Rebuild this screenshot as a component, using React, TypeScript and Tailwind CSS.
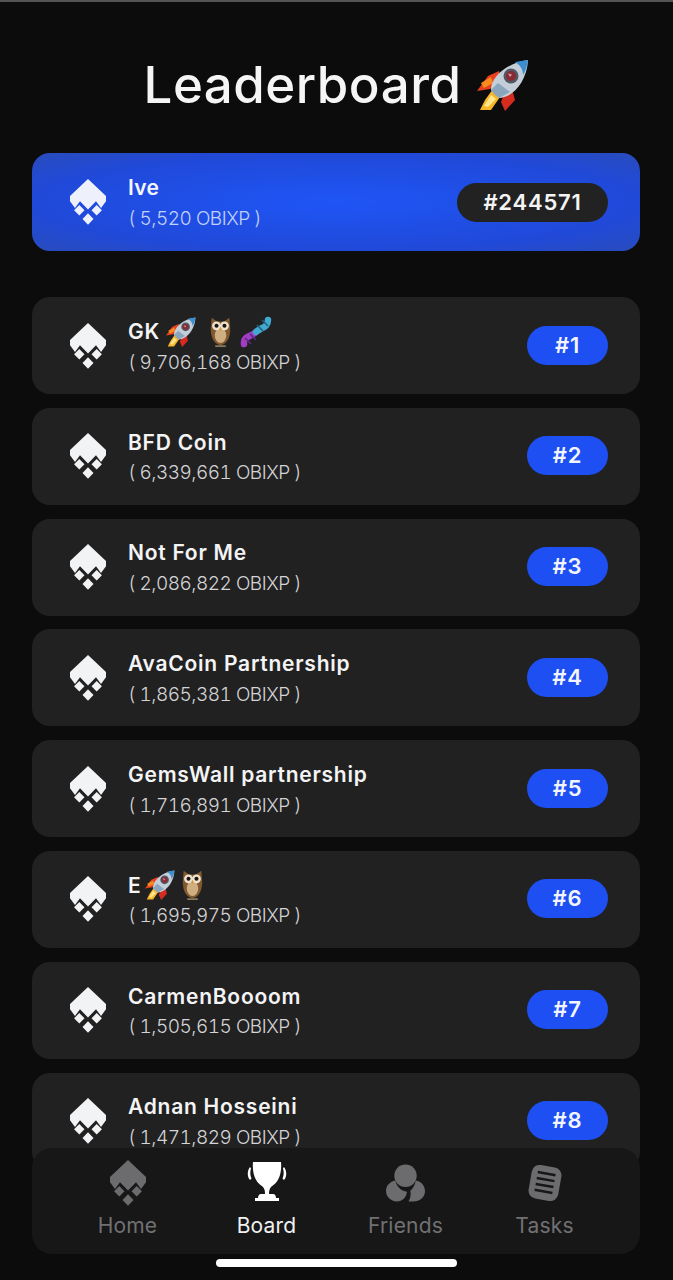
import type { ReactNode } from "react";

const font = "font-['Inter','Liberation_Sans',sans-serif]";

function Logo({ className }: { className: string }) {
  return (
    <svg viewBox="0 0 36 46" className={className} fill="currentColor">
      <path d="M18 0 36 17V22.300L31 29 26 22.300 18 30.600 10 22.300 5 29 0 22.300V17Z" />
      <path d="M9.300 26 14.500 31.300 9.300 36.600 4.100 31.300Z" />
      <path d="M26.700 26 31.900 31.300 26.700 36.600 21.500 31.300Z" />
      <path d="M18 34.200 23.500 40 18 45.800 12.500 40Z" />
    </svg>
  );
}

function Rocket({ className }: { className: string }) {
  return (
    <svg viewBox="0 0 52 52" className={className}>
      <path d="M11 17 22 12 24 21 13 30 0 32Z" fill="#e8401c" />
      <path d="M4 24 14 18 16 24 7 29Z" fill="#f78a1e" />
      <path d="M35 30 38 41 28 52 24 43 28 33Z" fill="#d62c1f" />
      <path d="M16 30 23 38 14 51 3 51 8 41Z" fill="#f7b52a" />
      <path d="M14 36 19 40 11 48 7 47Z" fill="#fde68a" />
      <path d="M14 31C13 20 28 4 51 1 50 23 35 39 22 39Z" fill="#c3ced8" />
      <path d="M38 3 51 1C50 7 49 11 46 16 46 10 43 6 38 3Z" fill="#3b8fd0" />
      <path d="M14 31 18 36 22 39 33 33 21 24Z" fill="#8aa6bd" />
      <circle cx="34" cy="17" r="7.500" fill="#4f5a66" />
      <circle cx="34" cy="17" r="5" fill="#8a2b33" />
      <path d="M31 14.500 35 15.500 33 18Z" fill="#d9a0a5" />
    </svg>
  );
}

function Owl({ className }: { className: string }) {
  return (
    <svg viewBox="0 0 26 36" className={className}>
      <path d="M3 2 9 6H17L23 2 24 14C24 24 21 31 13 33 5 31 2 24 2 14Z" fill="#80592f" />
      <ellipse cx="13" cy="22" rx="6.500" ry="8.500" fill="#cfae82" />
      <circle cx="8.500" cy="11" r="5" fill="#efe3cf" />
      <circle cx="17.500" cy="11" r="5" fill="#efe3cf" />
      <circle cx="8.500" cy="11" r="2.300" fill="#1c1410" />
      <circle cx="17.500" cy="11" r="2.300" fill="#1c1410" />
      <path d="M13 12 14.500 15 13 17 11.500 15Z" fill="#d39a3a" />
      <path d="M7 34H19" stroke="#8a7a5a" strokeWidth="2" />
    </svg>
  );
}

function Dna({ className }: { className: string }) {
  return (
    <svg viewBox="0 0 32 32" className={className} fill="none">
      <path d="M4 28C3 20 11 21 16 16" stroke="#a23cc0" strokeWidth="6.500" strokeLinecap="round" />
      <path d="M16 16C21 11 28 12 28 4" stroke="#3fa9cf" strokeWidth="6.500" strokeLinecap="round" />
      <path d="M5 22 11 28M10 18 16 24" stroke="#5a2a86" strokeWidth="1.600" />
      <path d="M17 9 23 15M22 4 28 10" stroke="#23607f" strokeWidth="1.600" />
    </svg>
  );
}

function Trophy({ className }: { className: string }) {
  return (
    <svg viewBox="0 0 40 42" className={className} fill="currentColor">
      <path d="M6 0H34C35 11 32 20 24.500 24.500 22.500 26 22 29 22 32H26C28 32 29 34 29 36H32V39H8V36H11C11 34 12 32 14 32H18C18 29 17.500 26 15.500 24.500 8 20 5 11 6 0Z" />
      <path d="M3 5C0 9 0 15 3 18L4.500 16.500C3 13 3 10 4 6.500Z" />
      <path d="M37 5C40 9 40 15 37 18L35.500 16.500C37 13 37 10 36 6.500Z" />
    </svg>
  );
}

function Friends({ className }: { className: string }) {
  return (
    <svg viewBox="0 0 40 40" className={className} fill="currentColor">
      <circle cx="20" cy="12" r="11.500" />
      <path d="M9.600 17C4 18 0 22.500 0 27.500 0 33.500 5 38.500 11 38.500 17 38.500 21 34 21.500 28.500 15.500 28 10.800 23 9.600 17Z" />
      <path d="M30.500 17C37 18 40 23 40 28 40 34 35 38.500 28 38.500H23C25.500 35 25.500 31 25 27.500 27.800 25 29.800 21 30.500 17Z" />
    </svg>
  );
}

function Tasks({ className }: { className: string }) {
  return (
    <svg viewBox="0 0 36 38" className={className}>
      <g transform="rotate(10 18 19)">
        <rect x="3" y="2" width="30" height="34" rx="8" fill="currentColor" />
        <path d="M9 9.500H27M9 15.500H27M9 21.500H27M9 27.500H27" stroke="#171718" strokeWidth="2.500" />
      </g>
    </svg>
  );
}

const rows: { name: ReactNode; xp: string }[] = [
  {
    name: (
      <>
        GK
        <Rocket className="ml-[6px] h-[30px] w-[30px]" />
        <Owl className="ml-[13px] h-[32px] w-[23px]" />
        <Dna className="ml-[8px] h-[32px] w-[32px]" />
      </>
    ),
    xp: "9,706,168",
  },
  { name: "BFD Coin", xp: "6,339,661" },
  { name: "Not For Me", xp: "2,086,822" },
  { name: "AvaCoin Partnership", xp: "1,865,381" },
  { name: "GemsWall partnership", xp: "1,716,891" },
  {
    name: (
      <>
        E
        <Rocket className="ml-[4px] h-[30px] w-[30px]" />
        <Owl className="ml-[6px] h-[32px] w-[23px]" />
      </>
    ),
    xp: "1,695,975",
  },
  { name: "CarmenBoooom", xp: "1,505,615" },
  { name: "Adnan Hosseini", xp: "1,471,829" },
];

function Row({ name, xp, rank }: { name: ReactNode; xp: string; rank: number }) {
  return (
    <div className="flex h-[97px] shrink-0 items-center rounded-[18px] bg-[#212122] pl-[38px] pr-[32px]">
      <Logo className="h-[46px] w-[36px] shrink-0 text-[#f2f3f5]" />
      <div className="ml-[22px] flex-1">
        <div className="mt-[1px] flex h-[30px] items-center text-[21px] font-semibold tracking-[0.75px] text-[#f4f4f5]">{name}</div>
        <div className="mt-[3px] text-[19px] font-light tabular-nums leading-[26px] tracking-[-0.5px] text-[#d4d4d6]">
          ( {xp} OBIXP )
        </div>
      </div>
      <div className="mt-[-1px] flex h-[39px] w-[81px] items-center justify-center rounded-full bg-[#1d4ff2] text-[22px] font-semibold tracking-[0.8px] text-[#f2f5ff]">
        #{rank}
      </div>
    </div>
  );
}

const nav = [
  { label: "Home", icon: <Logo className="h-[46px] w-[36px]" />, active: false },
  { label: "Board", icon: <Trophy className="h-[42px] w-[40px]" />, active: true },
  { label: "Friends", icon: <Friends className="h-[39px] w-[39px]" />, active: false },
  { label: "Tasks", icon: <Tasks className="h-[38px] w-[36px]" />, active: false },
];

export default function App() {
  return (
    <div className={`relative h-[1280px] w-[673px] overflow-hidden border-t-2 border-[#555] bg-[#0c0c0d] ${font}`}>
      <div className="flex h-[151px] items-start justify-center pt-[49px]">
        <h1 className="text-[51px] font-medium leading-[68px] tracking-[0.5px] text-[#f5f5f5]">Leaderboard</h1>
        <Rocket className="ml-[16px] mt-[8px] h-[52px] w-[52px]" />
      </div>

      <div className="ml-[32px] mr-[33px] flex h-[98px] items-center rounded-[18px] bg-[radial-gradient(ellipse_at_center,#1f55f6_0%,#2049d8_70%,#2a4cbc_100%)] pl-[38px] pr-[32px]">
        <Logo className="h-[46px] w-[36px] shrink-0 text-[#eef1fb]" />
        <div className="ml-[22px] flex-1">
          <div className="mt-[1px] flex h-[30px] items-center text-[21px] font-semibold tracking-[0.3px] text-[#f4f6ff]">Ive</div>
          <div className="mt-[3px] text-[19px] font-light tabular-nums leading-[26px] tracking-[-0.5px] text-[#c3d2fb]">( 5,520 OBIXP )</div>
        </div>
        <div className="flex h-[39px] w-[151px] items-center justify-center rounded-full bg-[#222223] text-[22px] font-semibold tracking-[0.8px] text-[#f4f4f5]">
          #244571
        </div>
      </div>

      <div className="ml-[32px] mr-[33px] mt-[46px] flex flex-col gap-[13.8px]">
        {rows.map((row, i) => (
          <Row key={i} name={row.name} xp={row.xp} rank={i + 1} />
        ))}
      </div>

      <div className="absolute left-[32px] top-[1146px] flex h-[106px] w-[608px] rounded-[20px] bg-[#171718] px-[26px]">
        {nav.map((item) => (
          <div
            key={item.label}
            className={`flex flex-1 flex-col items-center ${item.active ? "text-white" : "text-[#6c6c6e]"}`}
          >
            <div className="flex h-[64px] items-center pt-[6px]">{item.icon}</div>
            <div className={`text-[21px] leading-[28px] tracking-[0.2px] ${item.active ? "text-[#f0f0f0]" : "text-[#717173]"}`}>{item.label}</div>
          </div>
        ))}
      </div>
      <div className="absolute left-[216px] top-[1257px] h-[8px] w-[241px] rounded-full bg-white" />
    </div>
  );
}
